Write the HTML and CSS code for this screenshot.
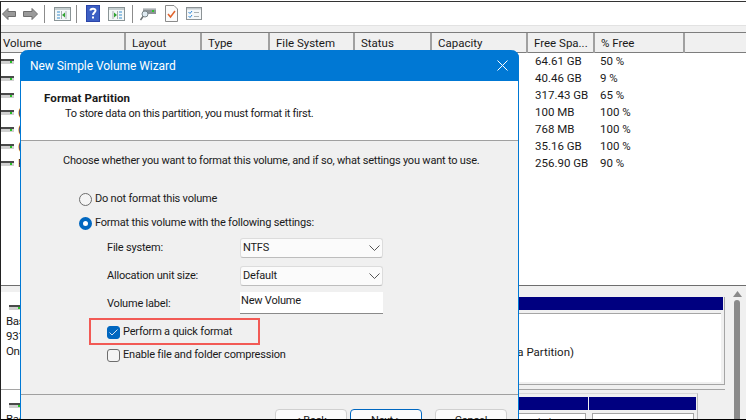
FILE: index.html
```html
<!DOCTYPE html>
<html lang="en">
<head>
<meta charset="utf-8">
<title>New Simple Volume Wizard</title>
<link rel="stylesheet" href="styles.css">
</head>
<body>
<div class="frame">
  <div class="toolbar">
    <svg class="tool" width="14" height="12" viewBox="0 0 14 12"><path d="M6 0.5L0.5 6L6 11.5V8.5H13.5V3.5H6Z" fill="#9a9a9a" stroke="#6e6e6e"/></svg>
    <svg class="tool tool-next" width="15" height="12" viewBox="0 0 15 12"><path d="M9 0.5L14.5 6L9 11.5V8.5H0.5V3.5H9Z" fill="#9a9a9a" stroke="#6e6e6e"/></svg>
    <span class="sep sep-a"></span>
    <svg class="tool" width="17" height="14" viewBox="0 0 17 14"><rect x=".5" y=".5" width="16" height="13" fill="#f4f8f8" stroke="#8a9496"/><rect x="1" y="1" width="15" height="2" fill="#c5ced0"/><path d="M3 5h3M3 8h3M3 11h3" stroke="#3a8fd0"/><path d="M7.5 4v8M12 4v8" stroke="#a5adaf"/><path d="M11 5.5v5L8 8z" fill="#2fa32f"/></svg>
    <span class="sep sep-b"></span>
    <svg class="tool" width="14" height="17" viewBox="0 0 14 17"><rect width="14" height="17" fill="#2b45a8"/><rect x="1" y="1" width="12" height="15" fill="#3c5fc4"/><path d="M4.5 5.5C4.5 3.5 9.5 3 9.5 5.5C9.5 7.5 7 7.5 7 10" fill="none" stroke="#fff" stroke-width="2"/><rect x="6" y="11.5" width="2" height="2" fill="#fff"/></svg>
    <svg class="tool tool-win2" width="17" height="14" viewBox="0 0 17 14"><rect x=".5" y=".5" width="16" height="13" fill="#f4f8f8" stroke="#8a9496"/><rect x="1" y="1" width="15" height="2" fill="#c5ced0"/><path d="M11 5h3M11 8h3M11 11h3" stroke="#3a8fd0"/><path d="M5 4v8M9.5 4v8" stroke="#a5adaf"/><path d="M6 5.5v5L9 8z" fill="#2fa32f"/></svg>
    <span class="sep sep-c"></span>
    <svg class="tool" width="16" height="14" viewBox="0 0 16 14"><rect x="3" y="1" width="13" height="6" fill="#8d9396"/><rect x="3" y="1" width="13" height="1.500" fill="#c9cdd0"/><rect x="12" y="3" width="2" height="2" fill="#2fc22f"/><circle cx="5" cy="7" r="3" fill="#dfeaf2" stroke="#7a8588"/><path d="M3 9.500L.5 13" stroke="#6a7073" stroke-width="1.500"/></svg>
    <svg class="tool tool-doc" width="13" height="17" viewBox="0 0 13 17"><path d="M.5.5H9L12.500 4V16.500H.5Z" fill="#fbfbfb" stroke="#8b8b8b"/><path d="M3 9L5.500 12L10 6" fill="none" stroke="#e0622a" stroke-width="1.500"/></svg>
    <svg class="tool tool-list" width="16" height="13" viewBox="0 0 16 13"><rect x=".5" y=".5" width="15" height="12" fill="#f5f8fa" stroke="#8d9396"/><rect x="1" y="1" width="14" height="1.500" fill="#c4cbcf"/><path d="M2.500 5L4 6.500L6 4M2.500 9L4 10.500L6 8" fill="none" stroke="#2d86d6"/><path d="M8 5.500h5M8 9.500h5" stroke="#a9b0b3"/></svg>
  </div>
  <div class="strip"></div>
  <div class="cols head">
    <div class="hcell first-h">Volume</div>
    <div class="hcell">Layout</div>
    <div class="hcell">Type</div>
    <div class="hcell">File System</div>
    <div class="hcell">Status</div>
    <div class="hcell">Capacity</div>
    <div class="hcell">Free Spa...</div>
    <div class="hcell">% Free</div>
    <div class="hcell"></div>
  </div>
  <div class="list">
    <div class="cols row"><div class="vol"><i class="disk"></i></div><div class="free">64.61 GB</div><div class="pct">50 %</div></div>
    <div class="cols row"><div class="vol"><i class="disk"></i></div><div class="free">40.46 GB</div><div class="pct">9 %</div></div>
    <div class="cols row"><div class="vol"><i class="disk"></i></div><div class="free">317.43 GB</div><div class="pct">65 %</div></div>
    <div class="cols row"><div class="vol"><i class="disk"></i>(</div><div class="free">100 MB</div><div class="pct">100 %</div></div>
    <div class="cols row"><div class="vol"><i class="disk"></i>(</div><div class="free">768 MB</div><div class="pct">100 %</div></div>
    <div class="cols row"><div class="vol"><i class="disk"></i>(</div><div class="free">35.16 GB</div><div class="pct">100 %</div></div>
    <div class="cols row"><div class="vol"><i class="disk"></i>F</div><div class="free">256.90 GB</div><div class="pct">90 %</div></div>
  </div>
  <div class="lower">
    <div class="disks">
      <div class="diskrow first">
        <div class="info">
          <i class="disk"></i>
          <div>Basic</div><div>931.51 GB</div><div>Online</div>
        </div>
        <div class="parts">
          <div class="part wide"><div class="navy"></div><div class="pbody">Healthy (Basic Data Partition)</div></div>
        </div>
      </div>
      <div class="diskrow second">
        <div class="info"><i class="disk"></i><div>Basic</div></div>
        <div class="parts">
          <div class="part grow"><div class="navy"></div><div class="pbody cell">(E:)</div></div>
          <div class="part fixed"><div class="navy"></div><div class="pbody cell"></div></div>
        </div>
      </div>
    </div>
    <div class="scroll"><svg class="arrow" width="9" height="6" viewBox="0 0 9 6"><path d="M4.500 0L9 6H0Z" fill="#8a8a8a"/></svg><div class="thumb"></div></div>
  </div>

  <div class="dialog">
    <div class="titlebar">
      <span>New Simple Volume Wizard</span>
      <svg width="11" height="11" viewBox="0 0 11 11"><path d="M.5.5L10.500 10.500M10.500.5L.5 10.500" stroke="#fff" fill="none"/></svg>
    </div>
    <div class="banner">
      <div class="btitle">Format Partition</div>
      <div class="bsub">To store data on this partition, you must format it first.</div>
    </div>
    <div class="content">
      <div class="lead">Choose whether you want to format this volume, and if so, what settings you want to use.</div>
      <div class="radio-row r1"><i class="radio"></i>Do not format this volume</div>
      <div class="radio-row r2"><i class="radio on"></i>Format this volume with the following settings:</div>
      <div class="form">
        <label>File system:</label><div class="select">NTFS<svg width="11" height="6" viewBox="0 0 11 6"><path d="M.5.5L5.500 5.500L10.500.5" fill="none" stroke="#555"/></svg></div>
        <label>Allocation unit size:</label><div class="select">Default<svg width="11" height="6" viewBox="0 0 11 6"><path d="M.5.5L5.500 5.500L10.500.5" fill="none" stroke="#555"/></svg></div>
        <label>Volume label:</label><div class="input">New Volume</div>
      </div>
      <div class="checks">
        <div class="check-row c1"><i class="check on"><svg width="9" height="7" viewBox="0 0 9 7"><path d="M.5 3.500L3 6L8.500.5" fill="none" stroke="#cfe4f7"/></svg></i>Perform a quick format<span class="mark"></span></div>
        <div class="check-row c2"><i class="check"></i>Enable file and folder compression</div>
      </div>
    </div>
    <div class="footer">
      <div class="btn">&lt; Back</div>
      <div class="btn primary">Next &gt;</div>
      <div class="btn cancel">Cancel</div>
    </div>
  </div>
</div>
</body>
</html>
```

FILE: styles.css
```css
* { box-sizing: border-box; }
html, body { margin: 0; height: 420px; background: #fff; overflow: hidden; }
body { padding-top: 1px; font: 11.5px/16px Roboto, sans-serif; color: #1a1a1a; }
.frame {
  position: relative;
  height: 419px;
  border-top: 1px solid #333;
  border-left: 1px solid #222;
  border-bottom: 1px solid #000;
  overflow: hidden;
  background: #fff;
  display: flex;
  flex-direction: column;
}
.toolbar { height: 23px; flex: none; display: flex; align-items: center; padding-left: 1px; }
.tool { flex: none; }
.tool-next { margin-left: 7px; }
.sep { width: 1px; height: 18px; background: #8c8c8c; flex: none; }
.sep-a { margin: 0 9px 0 6px; }
.sep-b { margin: 0 9px 0 5px; }
.sep-c { margin: 0 7px 0 7px; }
.tool-win2 { margin-left: 8px; }
.tool-doc { margin-left: 9px; }
.tool-list { margin-left: 8px; }
.strip { height: 7px; flex: none; background: #f0f0f0; border-top: 1px solid #e2e2e2; }
.cols { display: grid; grid-template-columns: 125px 76px 68px 85px 77px 96px 67px 90px 1fr; }
.head { height: 21px; flex: none; background: #f0f0f0; border-top: 1px solid #7d7d7d; border-bottom: 1px solid #7d7d7d; }
.hcell { padding-left: 6px; line-height: 20px; border-right: 2px solid #a0a0a0; }
.first-h { padding-left: 2px; }
.hcell:last-child { border-right: 0; }
.list { flex: none; height: 232px; }
.row { height: 17px; line-height: 17px; }
.vol { grid-column: 1 / 7; display: flex; align-items: center; }
.free { padding-left: 7px; }
.pct { padding-left: 5px; }
.disk {
  display: block;
  width: 13px;
  height: 5px;
  flex: none;
  margin-right: 4px;
  background: linear-gradient(#4a4a4a 0 2px, #d0d0d0 2px 5px);
  position: relative;
}
.disk::after { content: ""; position: absolute; right: 2px; top: 2px; width: 2px; height: 2px; background: #27c427; }
.lower { flex: 1; display: flex; background: #f0f0f0; border-top: 1px solid #6e6e6e; min-height: 0; }
.disks { flex: 1; min-width: 0; }
.diskrow { display: flex; }
.diskrow.first { height: 104px; border-bottom: 1px solid #a5a5a5; }
.info { width: 118px; flex: none; background: #fff; padding: 0 0 0 5px; line-height: 15px; letter-spacing: -0.3px; }
.first .info { margin-top: 6px; padding-top: 13px; }
.first .info .disk { margin: 0 0 4px 3px; }
.second .info { padding-top: 13px; margin-top: 0; }
.second .info .disk { margin: 0 0 4px 3px; }
.parts { flex: 1; display: flex; padding: 11px 0 0 0; width: 606px; }
.part { display: flex; flex-direction: column; }
.wide { flex: none; width: 606px; height: 88px; border-right: 1px solid #a5a5a5; border-bottom: 1px solid #a5a5a5; }
.navy { height: 13px; flex: none; background: #000080; margin-right: 1px; }
.pbody { flex: 1; background: #fff; margin: 3px 3px 2px 0; border-top: 1px solid #a5a5a5; padding: 30px 0 0 304px; line-height: 16px; }
.second .parts { flex: none; border-top: 1px solid #d8d8d8; border-right: 1px solid #bbb; margin-top: 3px; padding-top: 3px; width: 579px; }
.grow { width: 470px; flex: none; }
.fixed { width: 108px; flex: none; }
.pbody.cell { padding: 1px 0 0 416px; margin: 3px 3px 0 0; border-left: 1px solid #a5a5a5; border-right: 1px solid #a5a5a5; }
.fixed .pbody.cell { padding: 0; margin-left: 3px; }
.scroll { width: 21px; flex: none; padding-left: 8px; }
.arrow { display: block; margin-top: 5px; }
.thumb { width: 6px; height: 200px; margin: 3px 0 0 1px; background: #8a8a8a; border-radius: 3px; }

.dialog {
  position: absolute;
  left: 19px;
  top: 48px;
  width: 499px;
  height: 400px;
  border: 1px solid #0078d4;
  border-top: 0;
  border-radius: 8px 8px 0 0;
  background: #f0f0f0;
  display: flex;
  flex-direction: column;
  font-size: 11px;
  letter-spacing: -0.2px;
}
.titlebar {
  height: 31px;
  flex: none;
  margin: 0 -1px;
  background: #0078d4;
  border-radius: 8px 8px 0 0;
  color: #fff;
  font-size: 12px;
  letter-spacing: -0.05px;
  display: flex;
  align-items: center;
  justify-content: space-between;
  padding: 0 11px 0 10px;
}
.banner { height: 60px; flex: none; background: #fff; border-bottom: 1px solid #a0a0a0; padding: 9px 0 0 23px; }
.btitle { font-weight: 700; line-height: 16px; font-size: 11.5px; letter-spacing: 0.1px; }
.bsub { padding-left: 21px; line-height: 15px; letter-spacing: -0.27px; }
.content { height: 254px; flex: none; border-bottom: 1px solid #a0a0a0; padding: 11px 0 0 42px; }
.lead { line-height: 17px; }
.radio-row { display: flex; align-items: center; padding-left: 16px; height: 16px; }
.r1 { margin-top: 22px; }
.r2 { margin-top: 8px; }
.radio { width: 13px; height: 13px; border-radius: 50%; border: 1px solid #6d6d6d; background: #f4f4f4; margin-right: 3px; flex: none; }
.radio.on { border: 4px solid #0067c0; background: #fff; }
.form { display: grid; grid-template-columns: 133px 143px; grid-auto-rows: 20px; row-gap: 8px; margin: 7px 0 0 44px; align-items: center; }
.form label { line-height: 16px; }
.select { height: 20px; background: #fbfbfb; border: 1px solid #dcdcdc; border-bottom-color: #bdbdbd; border-radius: 3px; padding-left: 2px; display: flex; align-items: center; justify-content: space-between; }
.select svg { margin-right: 2px; flex: none; }
.input { height: 22px; margin-top: -2px; background: #fff; border-bottom: 1px solid #8a8a8a; padding: 0 0 0 1px; line-height: 18px; }
.checks { margin: 10px 0 0 44px; }
.check-row { position: relative; display: flex; align-items: center; height: 16px; }
.c2 { margin-top: 7px; }
.check { width: 13px; height: 13px; margin-right: 3px; flex: none; border: 1px solid #6d6d6d; border-radius: 3px; background: #f4f4f4; display: flex; align-items: center; justify-content: center; }
.check.on { background: #0067c0; border-color: #0067c0; }
.mark { position: absolute; left: -18px; top: -6px; width: 171px; height: 27px; border: 2px solid #f25a55; }
.footer { display: flex; padding: 14px 0 0 254px; }
.btn { width: 72px; height: 24px; border: 1px solid #d0d0d0; border-radius: 4px; background: #fbfbfb; text-align: center; line-height: 22px; }
.primary { margin-left: 3px; border: 1px solid #0067c0; }
.cancel { margin-left: 13px; }
```
